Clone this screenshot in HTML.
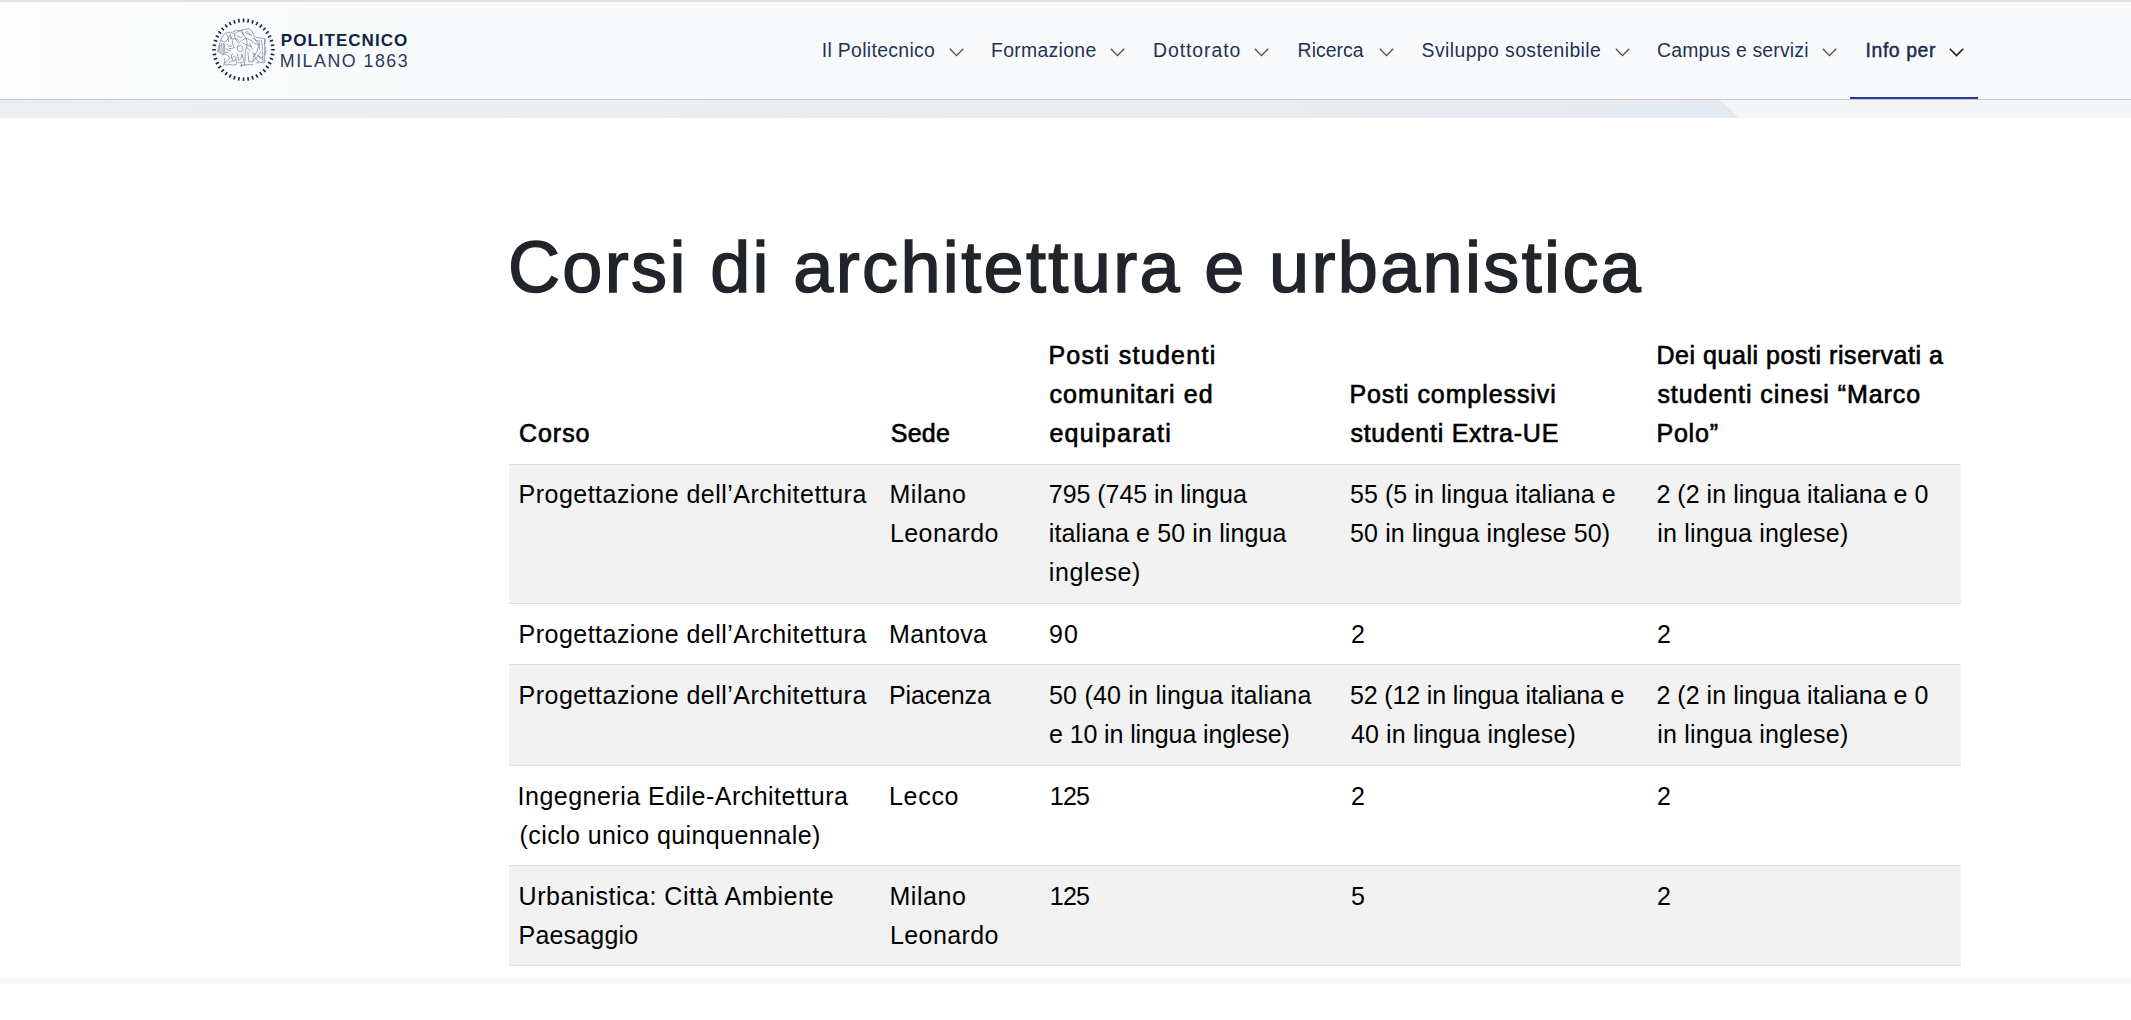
<!DOCTYPE html>
<html><head><meta charset="utf-8">
<style>
html,body{margin:0;padding:0;}
body{width:2131px;height:1020px;overflow:hidden;background:#fff;position:relative;font-family:"Liberation Sans",sans-serif;}
.topbar{position:absolute;left:0;top:0;width:2131px;height:2px;background:#e2e3e1;}
.header{position:absolute;left:0;top:2px;width:2131px;height:97px;background:linear-gradient(to right,#fdfdfd 0px,#fbfcfc 130px,#f9fafb 400px,#f9fafb 100%);}
.header .lft{position:absolute;left:0;top:0;width:131px;height:97px;background:#fbfcfc;}
.hline{position:absolute;left:0;top:99px;width:2131px;height:1px;background:#c9cdd1;}
.band{position:absolute;left:0;top:100px;width:2131px;height:18px;background:linear-gradient(to right,#ebeff3 0%,#e8edf2 60%,#e4eaf1 80%);}
.band2{position:absolute;left:0;top:100px;width:2131px;height:18px;background:#f3f5f7;clip-path:polygon(1720px 0,2131px 0,2131px 18px,1739px 18px);}
.logo{position:absolute;left:208px;top:14px;width:72px;height:72px;}
.lt1{position:absolute;left:280.8000000000004px;top:30.5px;font-weight:700;font-size:17px;line-height:20px;color:#0f2346;white-space:nowrap;letter-spacing:1.0199999999999598px;}
.lt2{position:absolute;left:279.8000000000004px;top:51px;font-weight:400;font-size:17.8px;line-height:20px;color:#2a3b5c;white-space:nowrap;letter-spacing:1.519999999999959px;}
.nav{position:absolute;top:38px;height:24px;font-size:19.4px;line-height:24px;color:#1d3354;white-space:nowrap;}
.chev{position:absolute;top:48px;width:15px;height:9px;}
.uline{position:absolute;left:1850px;top:97px;width:128px;height:2px;background:#2b3c95;}
h1{position:absolute;left:508.0px;top:227px;margin:0;font-size:72px;line-height:80px;font-weight:400;-webkit-text-stroke:1.5px #212529;color:#212529;white-space:nowrap;letter-spacing:2.36470588235297px;}
.tbl{position:absolute;left:509px;top:326px;width:1452px;}
.row{display:flex;border-top:1px solid #dcdfe3;box-sizing:border-box;}
.row.hd{border-top:none;align-items:flex-end;height:138px;}
.row.g{background:#f2f2f2;}
.c{box-sizing:border-box;padding:10.5px 11px;font-size:25px;line-height:39px;color:#000;white-space:nowrap;}
.row:not(.hd) .c{padding-top:10.5px;}
.hd .c{font-weight:400;-webkit-text-stroke:0.65px #000;}
.ln{position:relative;top:0px;}
.hd .ln,.r1 .ln{top:-1px;}
.c1{width:371px}.c2{width:159px}.c3{width:301px}.c4{width:306px}.c5{width:315px}
.btm{position:absolute;left:509px;top:965px;width:1452px;height:1px;background:#dcdfe3;}
.foot{position:absolute;left:0;top:977px;width:2131px;height:8px;background:linear-gradient(to bottom,rgba(0,0,0,0),rgba(0,0,0,0.035) 60%,rgba(0,0,0,0));}
</style></head>
<body>
<div class="topbar"></div>
<div class="header"></div>
<div class="hline"></div>
<div class="band"></div>
<div class="band2"></div>
<svg class="logo" viewBox="0 0 72 72"><path d="M35.50 8.20L35.50 4.60M39.82 8.54L40.38 4.98M44.03 9.55L45.14 6.13M48.03 11.21L49.66 8.00M51.72 13.47L53.84 10.56M55.02 16.28L57.56 13.74M57.83 19.58L60.74 17.46M60.09 23.27L63.30 21.64M61.75 27.27L65.17 26.16M62.76 31.48L66.32 30.92M63.10 35.80L66.70 35.80M62.76 40.12L66.32 40.68M61.75 44.33L65.17 45.44M60.09 48.33L63.30 49.96M57.83 52.02L60.74 54.14M55.02 55.32L57.56 57.86M51.72 58.13L53.84 61.04M48.03 60.39L49.66 63.60M44.03 62.05L45.14 65.47M39.82 63.06L40.38 66.62M35.50 63.40L35.50 67.00M31.18 63.06L30.62 66.62M26.97 62.05L25.86 65.47M22.97 60.39L21.34 63.60M19.28 58.13L17.16 61.04M15.98 55.32L13.44 57.86M13.17 52.02L10.26 54.14M10.91 48.33L7.70 49.96M9.25 44.33L5.83 45.44M8.24 40.12L4.68 40.68M7.90 35.80L4.30 35.80M8.24 31.48L4.68 30.92M9.25 27.27L5.83 26.16M10.91 23.27L7.70 21.64M13.17 19.58L10.26 17.46M15.98 16.28L13.44 13.74M19.28 13.47L17.16 10.56M22.97 11.21L21.34 8.00M26.97 9.55L25.86 6.13M31.18 8.54L30.62 4.98" stroke="#13264a" stroke-width="1.6" fill="none"/><g transform="translate(8,12) scale(0.04314)" fill="none" stroke="#56648a" stroke-width="14" stroke-linejoin="round" stroke-linecap="round">
<path d="M40 590 C60 480 90 400 110 330 C140 240 190 170 260 150 C330 130 390 160 430 190 C480 150 520 110 580 100 C640 90 700 70 760 60 C820 90 860 160 890 250 C950 270 1050 280 1130 300 C1150 340 1140 380 1120 420"/>
<path d="M400 130 C450 100 530 90 580 140 C620 170 640 200 650 230"/>
<path d="M110 330 C150 360 190 380 230 350 C270 320 300 280 310 230"/>
<path d="M130 400 L110 600 M170 400 L160 620 M90 450 L70 580 M200 420 L190 600"/>
<path d="M40 590 C80 620 120 640 170 640 C200 620 250 600 290 620"/>
<path d="M1130 300 L1130 850 L940 850 M1150 500 C1160 560 1160 620 1140 660"/>
<path d="M360 260 C380 330 380 420 420 500 C380 520 330 540 300 520"/>
<path d="M430 190 C420 260 470 330 520 400 C560 360 620 330 650 300 C700 280 760 300 800 330"/>
<path d="M500 470 C480 520 500 570 540 590 C600 610 640 560 620 500 C600 450 540 440 500 470"/>
<path d="M600 100 C620 200 700 250 720 350 C730 430 700 520 680 600 L660 900"/>
<path d="M820 330 C860 400 900 430 1000 420 C980 520 940 600 900 680 M1000 420 L1010 530"/>
<path d="M140 680 C200 620 260 660 300 720 C330 780 260 820 220 840 C180 880 200 920 260 900 C320 880 380 920 460 900 C490 860 480 820 460 780"/>
<path d="M380 640 C340 680 350 760 400 800 C440 830 470 790 460 740 C450 690 400 700 380 740"/>
<path d="M500 650 L520 790 C560 800 580 780 600 650 M600 650 L640 790"/>
<path d="M740 620 L760 830 L860 830 C860 760 870 700 900 640"/>
<path d="M860 620 C890 700 920 780 990 830 M1040 610 C980 680 930 740 880 800 M980 680 L1080 790"/>
<path d="M560 920 C640 900 760 890 850 900 M590 880 L600 940"/>
<path d="M200 760 C210 800 190 860 180 900"/>
<path d="M680 150 C720 200 780 180 830 220 M850 280 C920 320 960 360 1020 350"/>
<path d="M390 300 C430 280 480 300 520 330 M620 400 C680 420 740 460 820 480"/>
<path d="M250 200 C280 250 300 300 290 360 M320 180 C340 220 350 260 340 300"/>
<path d="M480 220 C520 250 560 270 600 260 M700 120 C740 140 770 160 790 200"/>
<path d="M250 420 C280 460 320 480 360 470 M230 520 C260 560 300 580 340 570"/>
<path d="M700 500 C740 520 780 540 800 580 M780 400 C800 450 820 500 850 530"/>
<path d="M900 300 C920 360 960 390 1020 400 M1050 330 C1070 400 1080 480 1070 560"/>
<path d="M300 860 C330 820 360 800 400 810 M520 850 C560 860 600 850 640 830"/>
<path d="M960 700 C1000 720 1040 740 1080 720 M1080 600 L1090 820"/>
</g>
</svg>
<div class="lt1" id="lt1">POLITECNICO</div>
<div class="lt2" id="lt2">MILANO 1863</div>
<div class="nav" id="n1" style="left:821.80px;letter-spacing:0.323px;">Il Politecnico</div>
<svg class="chev" style="left:949px" viewBox="0 0 15 9"><path d="M0.8 0.8 L7.5 7.6 L14.2 0.8" fill="none" stroke="#484848" stroke-width="1.25"/></svg>
<div class="nav" id="n2" style="left:991.00px;letter-spacing:0.311px;">Formazione</div>
<svg class="chev" style="left:1110px" viewBox="0 0 15 9"><path d="M0.8 0.8 L7.5 7.6 L14.2 0.8" fill="none" stroke="#484848" stroke-width="1.25"/></svg>
<div class="nav" id="n3" style="left:1153.00px;letter-spacing:0.950px;">Dottorato</div>
<svg class="chev" style="left:1253.5px" viewBox="0 0 15 9"><path d="M0.8 0.8 L7.5 7.6 L14.2 0.8" fill="none" stroke="#484848" stroke-width="1.25"/></svg>
<div class="nav" id="n4" style="left:1297.60px;letter-spacing:0.033px;">Ricerca</div>
<svg class="chev" style="left:1378.5px" viewBox="0 0 15 9"><path d="M0.8 0.8 L7.5 7.6 L14.2 0.8" fill="none" stroke="#484848" stroke-width="1.25"/></svg>
<div class="nav" id="n5" style="left:1421.60px;letter-spacing:0.411px;">Sviluppo sostenibile</div>
<svg class="chev" style="left:1614.5px" viewBox="0 0 15 9"><path d="M0.8 0.8 L7.5 7.6 L14.2 0.8" fill="none" stroke="#484848" stroke-width="1.25"/></svg>
<div class="nav" id="n6" style="left:1657.00px;letter-spacing:0.187px;">Campus e servizi</div>
<svg class="chev" style="left:1821.5px" viewBox="0 0 15 9"><path d="M0.8 0.8 L7.5 7.6 L14.2 0.8" fill="none" stroke="#484848" stroke-width="1.25"/></svg>
<div class="nav" id="n7" style="left:1865.60px;letter-spacing:0.571px;-webkit-text-stroke:0.45px #172c4e;color:#172c4e;">Info per</div>
<svg class="chev" style="left:1949px" viewBox="0 0 15 9"><path d="M0.8 0.8 L7.5 7.6 L14.2 0.8" fill="none" stroke="#1a1a1a" stroke-width="1.45"/></svg>
<div class="uline"></div>
<h1 id="h1">Corsi di architettura e urbanistica</h1>
<div class="tbl">
<div class="row hd r0"><div class="c c1"><div class="ln" id="h1a" style="letter-spacing:0.950px;margin-left:-1.00px;">Corso</div></div><div class="c c2"><div class="ln" id="h2a" style="letter-spacing:0.200px;margin-left:-0.20px;">Sede</div></div><div class="c c3"><div class="ln" id="h3a" style="letter-spacing:1.292px;margin-left:-1.60px;">Posti studenti</div><div class="ln" id="h3b" style="letter-spacing:1.100px;margin-left:-0.60px;">comunitari ed</div><div class="ln" id="h3c" style="letter-spacing:1.289px;margin-left:-0.60px;">equiparati</div></div><div class="c c4"><div class="ln" id="h4a" style="letter-spacing:0.912px;margin-left:-1.60px;">Posti complessivi</div><div class="ln" id="h4b" style="letter-spacing:0.750px;margin-left:-0.60px;">studenti Extra-UE</div></div><div class="c c5"><div class="ln" id="h5a" style="letter-spacing:0.546px;margin-left:-0.60px;">Dei quali posti riservati a</div><div class="ln" id="h5b" style="letter-spacing:0.933px;margin-left:0.40px;">studenti cinesi “Marco</div><div class="ln" id="h5c" style="letter-spacing:0.800px;margin-left:-0.60px;">Polo”</div></div></div>
<div class="row g r1" style="height:139px"><div class="c c1"><div class="ln" id="r1a" style="letter-spacing:0.473px;margin-left:-1.40px;">Progettazione dell’Architettura</div></div><div class="c c2"><div class="ln" id="r1b" style="letter-spacing:0.560px;margin-left:-1.60px;">Milano</div><div class="ln" id="r1c" style="letter-spacing:0.400px;margin-left:-1.00px;">Leonardo</div></div><div class="c c3"><div class="ln" id="r1d" style="letter-spacing:-0.047px;margin-left:-1.20px;">795 (745 in lingua</div><div class="ln" id="r1e" style="letter-spacing:0.127px;margin-left:-1.20px;">italiana e 50 in lingua</div><div class="ln" id="r1f" style="letter-spacing:0.571px;margin-left:-1.20px;">inglese)</div></div><div class="c c4"><div class="ln" id="r1g" style="letter-spacing:0.064px;margin-left:-1.00px;">55 (5 in lingua italiana e</div><div class="ln" id="r1h" style="letter-spacing:0.130px;margin-left:-1.00px;">50 in lingua inglese 50)</div></div><div class="c c5"><div class="ln" id="r1i" style="letter-spacing:0.038px;margin-left:-0.60px;">2 (2 in lingua italiana e 0</div><div class="ln" id="r1j" style="letter-spacing:0.200px;margin-left:0.20px;">in lingua inglese)</div></div></div>
<div class="row r2" style="height:61px"><div class="c c1"><div class="ln" id="r2a" style="letter-spacing:0.473px;margin-left:-1.40px;">Progettazione dell’Architettura</div></div><div class="c c2"><div class="ln" id="r2b" style="letter-spacing:0.333px;margin-left:-2.00px;">Mantova</div></div><div class="c c3"><div class="ln" id="r2c" style="letter-spacing:1.000px;margin-left:-1.00px;">90</div></div><div class="c c4"><div class="ln" id="r2d" style="letter-spacing:0.000px;">2</div></div><div class="c c5"><div class="ln" id="r2e" style="letter-spacing:0.000px;">2</div></div></div>
<div class="row g r3" style="height:101px"><div class="c c1"><div class="ln" id="r3a" style="letter-spacing:0.473px;margin-left:-1.40px;">Progettazione dell’Architettura</div></div><div class="c c2"><div class="ln" id="r3b" style="letter-spacing:-0.143px;margin-left:-2.00px;">Piacenza</div></div><div class="c c3"><div class="ln" id="r3c" style="letter-spacing:0.217px;margin-left:-1.00px;">50 (40 in lingua italiana</div><div class="ln" id="r3d" style="letter-spacing:-0.109px;margin-left:-1.00px;">e 10 in lingua inglese)</div></div><div class="c c4"><div class="ln" id="r3e" style="letter-spacing:-0.138px;margin-left:-1.00px;">52 (12 in lingua italiana e</div><div class="ln" id="r3f" style="letter-spacing:0.120px;">40 in lingua inglese)</div></div><div class="c c5"><div class="ln" id="r3g" style="letter-spacing:0.038px;margin-left:-0.60px;">2 (2 in lingua italiana e 0</div><div class="ln" id="r3h" style="letter-spacing:0.200px;margin-left:0.20px;">in lingua inglese)</div></div></div>
<div class="row r4" style="height:100px"><div class="c c1"><div class="ln" id="r4a" style="letter-spacing:0.479px;margin-left:-2.40px;">Ingegneria Edile-Architettura</div><div class="ln" id="r4b" style="letter-spacing:0.408px;margin-left:-0.40px;">(ciclo unico quinquennale)</div></div><div class="c c2"><div class="ln" id="r4c" style="letter-spacing:0.700px;margin-left:-2.00px;">Lecco</div></div><div class="c c3"><div class="ln" id="r4d" style="letter-spacing:-0.800px;margin-left:-0.20px;">125</div></div><div class="c c4"><div class="ln" id="r4e" style="letter-spacing:0.000px;">2</div></div><div class="c c5"><div class="ln" id="r4f" style="letter-spacing:0.000px;">2</div></div></div>
<div class="row g r5" style="height:100px"><div class="c c1"><div class="ln" id="r5a" style="letter-spacing:0.523px;margin-left:-1.40px;">Urbanistica: Città Ambiente</div><div class="ln" id="r5b" style="letter-spacing:0.175px;margin-left:-1.40px;">Paesaggio</div></div><div class="c c2"><div class="ln" id="r5c" style="letter-spacing:0.560px;margin-left:-1.60px;">Milano</div><div class="ln" id="r5d" style="letter-spacing:0.400px;margin-left:-1.00px;">Leonardo</div></div><div class="c c3"><div class="ln" id="r5e" style="letter-spacing:-0.800px;margin-left:-0.20px;">125</div></div><div class="c c4"><div class="ln" id="r5f" style="letter-spacing:0.000px;">5</div></div><div class="c c5"><div class="ln" id="r5g" style="letter-spacing:0.000px;">2</div></div></div>
</div>
<div class="btm"></div>
<div class="foot"></div>
</body></html>
